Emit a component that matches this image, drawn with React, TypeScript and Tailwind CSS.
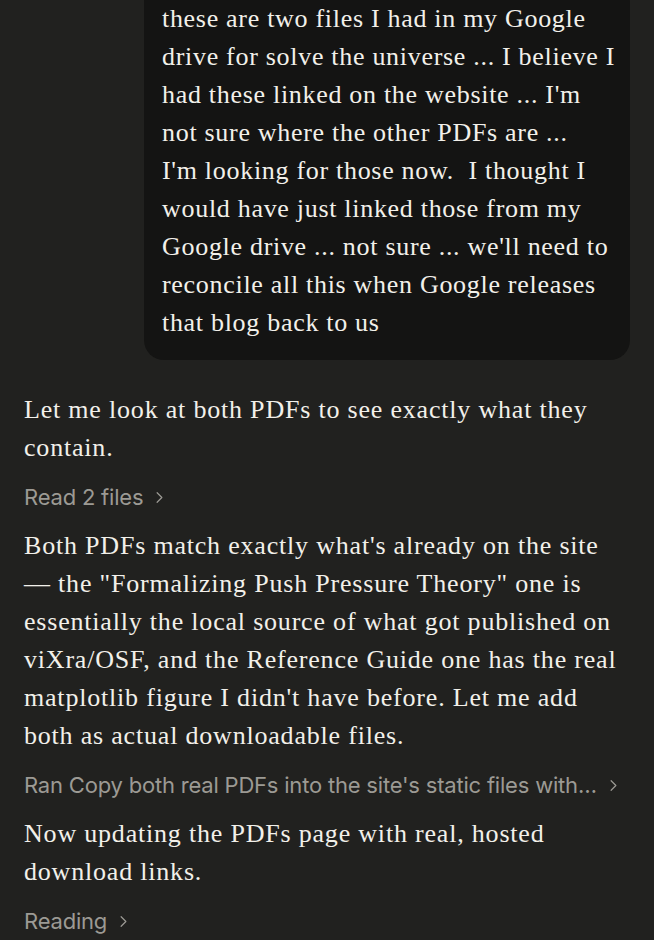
import React from "react";
import { ChevronRight } from "lucide-react";

function ToolRow({ label }: { label: string }) {
  return (
    <div className="flex items-center gap-[7px] h-[30px] text-[22px] text-[#9c9a94] font-['Inter',sans-serif] tracking-[-0.2px]">
      <span className="truncate min-w-0">{label}</span>
      <ChevronRight size={19} strokeWidth={1.5} className="shrink-0 text-[#9c9a94]" />
    </div>
  );
}

function Para({ children }: { children: React.ReactNode }) {
  return (
    <p className="text-[26px] leading-[38px] tracking-[0.8px] text-[#f2f0ea] font-['Liberation_Serif',serif]">
      {children}
    </p>
  );
}

export default function App() {
  return (
    <div className="w-[654px] min-h-screen bg-[#21211f] px-6 overflow-hidden font-['Liberation_Serif',serif]">
      <div className="flex justify-end -mt-[18px]">
        <div className="w-[486px] rounded-[20px] bg-[#141413] pt-[18px] pb-[18px] pl-[18px] pr-[14px] text-[26px] leading-[38px] tracking-[0.7px] text-[#f2f0ea]">
          these are two files I had in my Google drive for solve the universe ... I believe I had these linked on
          the website ... I'm not sure where the other PDFs are ...
          <br />
          I'm looking for those now.&nbsp; I thought I would have just linked those from my Google drive ... not
          sure ... we'll need to reconcile all this when Google releases that blog back to us
        </div>
      </div>

      <div className="mt-[31px] flex flex-col gap-[15px]">
        <Para>Let me look at both PDFs to see exactly what they contain.</Para>
        <ToolRow label="Read 2 files" />
        <Para>
          Both PDFs match exactly what's already on the site — the "Formalizing Push Pressure Theory" one is
          essentially the local source of what got published on viXra/OSF, and the Reference Guide one has the real
          matplotlib figure I didn't have before. Let me add both as actual downloadable files.
        </Para>
        <ToolRow label="Ran Copy both real PDFs into the site's static files with…" />
        <Para>Now updating the PDFs page with real, hosted download links.</Para>
        <ToolRow label="Reading" />
      </div>
    </div>
  );
}
